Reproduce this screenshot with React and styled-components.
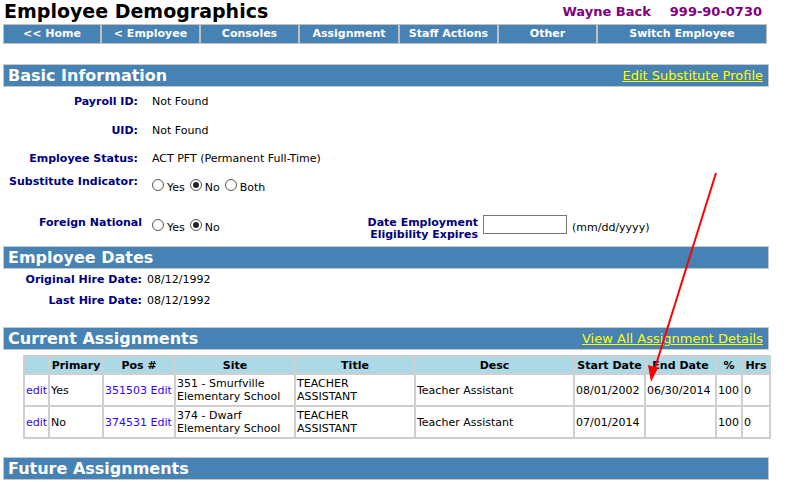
import React from 'react'
import styled, { createGlobalStyle } from 'styled-components'

const GlobalStyle = createGlobalStyle`
  body {
    margin:0;
    background:#fff;
    font-family:"DejaVu Sans", Verdana, sans-serif;
    font-size:11px;
    color:#000;
  }
`;

const Root = styled.div`
  position:relative;
  width:786px;
  height:482px;
  overflow:hidden;
  padding-left:3px;
  box-sizing:border-box;
`;

const Page = styled.div`
  width:766px;
`;

const TopRow = styled.div`
  display:flex;
  justify-content:space-between;
  align-items:flex-end;
  height:22px;
  padding:0 7px 0 1px;
`;

const Title = styled.h1`
  margin:0;
  font-size:19px;
  font-weight:bold;
  line-height:22px;
`;

const Who = styled.div`
  color:#800080;
  font-weight:bold;
  font-size:13px;
  line-height:20px;
  display:flex;
  gap:19px;
`;

const Nav = styled.div`
  display:grid;
  grid-template-columns:96px 97px 97px 98px 97px 97px 168px;
  gap:2px;
  padding:1px;
  margin-top:2px;
  width:764px;
  box-sizing:border-box;
  background:#c0c0c0;
`;

const NavItem = styled.div`
  background:#4682b4;
  color:#fff;
  font-weight:bold;
  text-align:center;
  height:18px;
  line-height:18px;
`;

const SectionBar = styled.div`
  display:flex;
  justify-content:space-between;
  align-items:center;
  height:21px;
  margin-top:${p => p.$top}px;
  padding:0 5px 0 4px;
  background:#4682b4;
  border:1px solid #c8c8c8;
`;

const SectionTitle = styled.span`
  color:#fff;
  font-weight:bold;
  font-size:16px;
`;

const BarLink = styled.a`
  color:#ffff00;
  font-size:13px;
  text-decoration:underline;
  cursor:pointer;
`;

const Row = styled.div`
  display:flex;
  align-items:${p => p.$align || 'center'};
  height:${p => p.$h}px;
  gap:${p => p.$gap || 14}px;
`;

const Label = styled.div`
  width:${p => p.$w || 135}px;
  flex:none;
  text-align:right;
  font-weight:bold;
  color:#000080;
  padding-top:${p => p.$pt || 0}px;
`;

const Value = styled.div`
  color:#000;
`;

const Radios = styled.div`
  display:flex;
  align-items:center;
  gap:3px;
  width:${p => p.$w ? p.$w + 'px' : 'auto'};
  flex:none;
  margin-left:${p => p.$ml || 0}px;
  padding-top:${p => p.$pt || 0}px;
`;

const RadioDot = styled.span`
  width:10px;
  height:10px;
  border:1px solid #555;
  border-radius:50%;
  box-sizing:content-box;
  display:inline-flex;
  align-items:center;
  justify-content:center;
  background:#fff;
  &::after {
    content:'';
    width:6px;
    height:6px;
    border-radius:50%;
    background:${p => p.$on ? '#222' : 'transparent'};
  }
`;

const RadioText = styled.span`
  margin-top:5px;
  margin-right:2px;
`;

const DateLabel = styled.div`
  width:141px;
  flex:none;
  text-align:right;
  font-weight:bold;
  color:#000080;
  line-height:12px;
  padding-top:2px;
`;

const DateInput = styled.div`
  width:82px;
  height:17px;
  border:1px solid #767676;
  flex:none;
`;

const Hint = styled.span`
  padding-top:6px;
`;

const Grid = styled.table`
  border-collapse:collapse;
  margin:5px 0 0 20px;
  table-layout:fixed;
  width:746px;
  td, th {
    border:2px solid #cfcfcf;
    padding:0 1px;
    text-align:left;
    line-height:13px;
    white-space:nowrap;
    overflow:hidden;
  }
  th {
    background:#add8e6;
    text-align:center;
    font-weight:bold;
    height:16px;
  }
  td {
    height:30px;
  }
`;

const Blue = styled.span`
  color:#3300ff;
`;

function Radio({ on, children }) {
  return (
    <>
      <RadioDot $on={on} />
      <RadioText>{children}</RadioText>
    </>
  )
}

const cols = [25, 54, 72, 120, 120, 159, 71, 71, 26, 28];

const rows = [
  { primary: 'Yes', pos: '351503', site: ['351 - Smurfville', 'Elementary School'], start: '08/01/2002', end: '06/30/2014' },
  { primary: 'No', pos: '374531', site: ['374 - Dwarf', 'Elementary School'], start: '07/01/2014', end: '' },
];

function App() {
  return (
    <Root>
      <GlobalStyle />
      <Page>
        <TopRow>
          <Title>Employee Demographics</Title>
          <Who><span>Wayne Back</span><span>999-90-0730</span></Who>
        </TopRow>
        <Nav>
          {['<< Home', '< Employee', 'Consoles', 'Assignment', 'Staff Actions', 'Other', 'Switch Employee'].map(n => (
            <NavItem key={n}>{n}</NavItem>
          ))}
        </Nav>

        <SectionBar $top={20}>
          <SectionTitle>Basic Information</SectionTitle>
          <BarLink>Edit Substitute Profile</BarLink>
        </SectionBar>
        <Row $h={29}><Label>Payroll ID:</Label><Value>Not Found</Value></Row>
        <Row $h={28}><Label>UID:</Label><Value>Not Found</Value></Row>
        <Row $h={28}><Label>Employee Status:</Label><Value>ACT PFT (Permanent Full-Time)</Value></Row>
        <Row $h={43} $align="flex-start">
          <Label $pt={3}>Substitute Indicator:</Label>
          <Radios $pt={4}>
            <Radio>Yes</Radio>
            <Radio on>No</Radio>
            <Radio>Both</Radio>
          </Radios>
        </Row>
        <Row $h={31} $align="flex-start" $gap={5}>
          <Label $w={139} $pt={1}>Foreign National</Label>
          <Radios $w={180} $ml={5} $pt={1}>
            <Radio>Yes</Radio>
            <Radio on>No</Radio>
          </Radios>
          <DateLabel>Date Employment<br />Eligibility Expires</DateLabel>
          <DateInput />
          <Hint>(mm/dd/yyyy)</Hint>
        </Row>

        <SectionBar $top={0}>
          <SectionTitle>Employee Dates</SectionTitle>
        </SectionBar>
        <Row $h={21} $gap={5}><Label $w={139}>Original Hire Date:</Label><Value>08/12/1992</Value></Row>
        <Row $h={20} $gap={5}><Label $w={139}>Last Hire Date:</Label><Value>08/12/1992</Value></Row>

        <SectionBar $top={17}>
          <SectionTitle>Current Assignments</SectionTitle>
          <BarLink>View All Assignment Details</BarLink>
        </SectionBar>
        <Grid>
          <colgroup>
            {cols.map((w, i) => <col key={i} style={{ width: w }} />)}
          </colgroup>
          <thead>
            <tr>
              <th></th><th>Primary</th><th>Pos #</th><th>Site</th><th>Title</th>
              <th>Desc</th><th>Start Date</th><th>End Date</th><th>%</th><th>Hrs</th>
            </tr>
          </thead>
          <tbody>
            {rows.map(r => (
              <tr key={r.pos}>
                <td><Blue>edit</Blue></td>
                <td>{r.primary}</td>
                <td><Blue>{r.pos} Edit</Blue></td>
                <td>{r.site[0]}<br />{r.site[1]}</td>
                <td>TEACHER<br />ASSISTANT</td>
                <td>Teacher Assistant</td>
                <td>{r.start}</td>
                <td>{r.end}</td>
                <td>100</td>
                <td>0</td>
              </tr>
            ))}
          </tbody>
        </Grid>

        <SectionBar $top={18}>
          <SectionTitle>Future Assignments</SectionTitle>
        </SectionBar>
      </Page>
      <svg width="786" height="482" style={{ position: 'absolute', left: 0, top: 0, pointerEvents: 'none' }}>
        <line x1="716" y1="173" x2="655" y2="368" stroke="#ff0000" strokeWidth="2" />
        <polygon points="651,382 648,365 658,368" fill="#ff0000" />
      </svg>
    </Root>
  )
}

export default App
